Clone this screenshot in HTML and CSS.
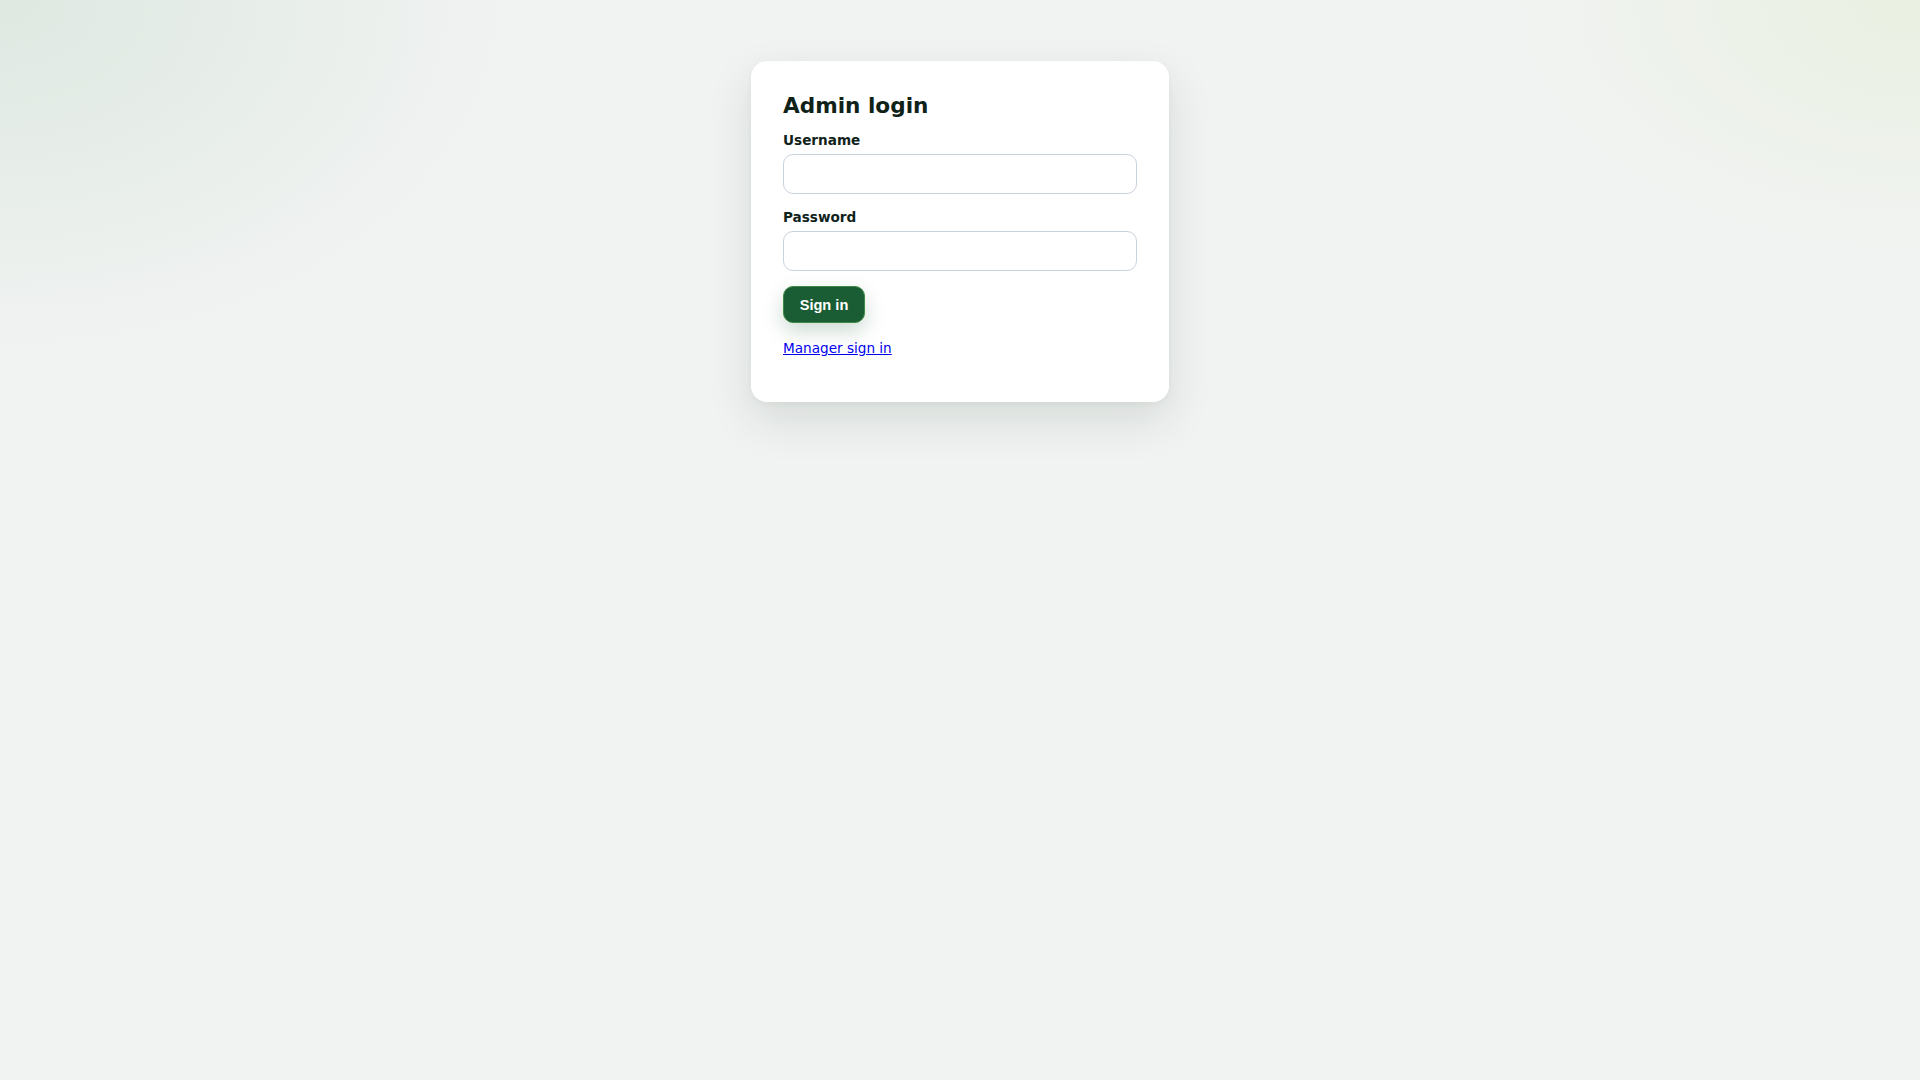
FILE: index.html
```html
<!DOCTYPE html>
<html lang="en">
<head>
<meta charset="utf-8">
<title>Admin login</title>
<link rel="stylesheet" href="styles.css">
</head>
<body>
<main class="page">
  <section class="card">
    <h1 class="title">Admin login</h1>
    <form class="form">
      <label class="label" for="u">Username</label>
      <input class="input" id="u" type="text">
      <label class="label" for="p">Password</label>
      <input class="input" id="p" type="password">
      <button class="btn" type="button">Sign in</button>
    </form>
    <p class="alt"><a href="#" class="link">Manager sign in</a></p>
  </section>
</main>
</body>
</html>
```
FILE: styles.css
```css
html, body {
  margin: 0;
  padding: 0;
  height: 100%;
}
body {
  font-family: "DejaVu Sans", Verdana, sans-serif;
  color: #10231a;
  background-color: #f1f3f2;
  background-image:
    radial-gradient(ellipse 520px 360px at 0% 0%, rgba(214,228,218,0.7), rgba(214,228,218,0) 100%),
    radial-gradient(ellipse 420px 260px at 100% 0%, rgba(228,239,214,0.6), rgba(228,239,214,0) 100%);
  background-repeat: no-repeat;
}
.page {
  display: flex;
  justify-content: center;
  padding-top: 61px;
}
.card {
  width: 418px;
  box-sizing: border-box;
  background: #ffffff;
  border-radius: 16px;
  padding: 32px 32px 32px;
  box-shadow: 0 18px 45px rgba(20, 40, 28, 0.12), 0 2px 6px rgba(20, 40, 28, 0.04);
}
.title {
  margin: 0;
  font-size: 21.6px;
  font-weight: 700;
  color: #0f2218;
  line-height: normal;
}
.form {
  display: flex;
  flex-direction: column;
  align-items: flex-start;
  margin-top: 14px;
}
.label {
  font-size: 13.6px;
  font-weight: 700;
  color: #10231a;
  line-height: normal;
  margin-bottom: 6px;
}
.input {
  box-sizing: border-box;
  width: 100%;
  height: 40px;
  border: 1px solid #c9d2df;
  border-radius: 10px;
  background: #fff;
  margin: 0 0 14.5px;
  padding: 0 12px;
  font-size: 14px;
}
.btn {
  height: 37px;
  width: 82px;
  margin-top: 1px;
  border: 1px solid #3f8a45;
  border-radius: 10px;
  background: #1a5c33;
  color: #ffffff;
  font-family: "Liberation Sans", Arial, sans-serif;
  font-weight: 700;
  font-size: 14.6px;
  padding: 0;
  box-shadow: 0 8px 20px rgba(26, 92, 51, 0.22);
}
.alt {
  margin: 16.5px 0 14px;
  font-size: 13.6px;
  line-height: normal;
}
.link {
  color: #0000ee;
  text-decoration: underline;
}
```
